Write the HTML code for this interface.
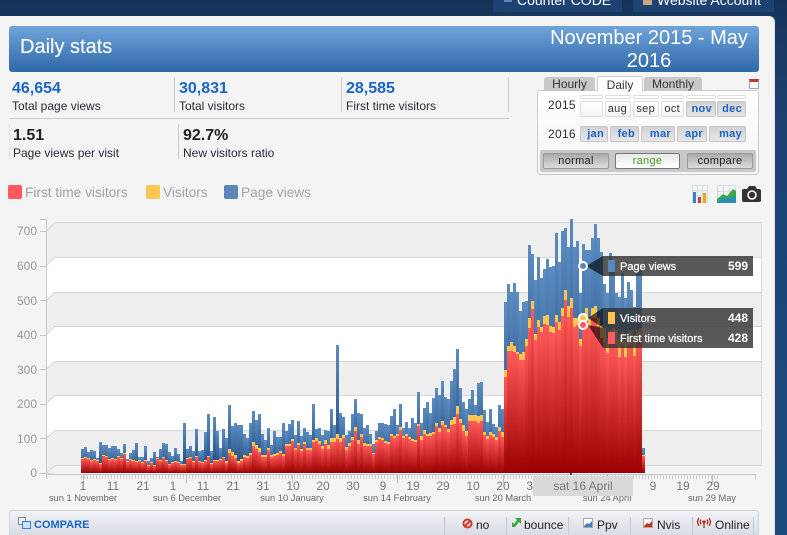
<!DOCTYPE html>
<html><head><meta charset="utf-8"><title>Daily stats</title>
<style>
html,body{margin:0;padding:0;overflow:hidden;width:787px;height:535px}
body{background:#16345a;font-family:"Liberation Sans",Arial,sans-serif;color:#222}
#page{position:absolute;left:0;top:0;width:787px;height:535px;overflow:hidden;background:linear-gradient(180deg,#16345a 0,#1c4272 120px,#1f4a80 535px)}
#page div,#page span{position:absolute;white-space:nowrap;box-sizing:border-box}
.nav{top:-8px;height:20px;background:#1e4272;color:#fff;font-size:14px;line-height:18px;border-radius:2px}
#panel{left:-6px;top:16px;width:781px;height:519px;background:#f4f4f4;border-radius:6px 6px 0 0;border-right:1px solid #dfe3e8}
#hd{left:9px;top:26px;width:750px;height:46px;background:linear-gradient(180deg,#70a4da,#2f69a8);border-radius:3px;color:#fff}
.n{font-size:16px;font-weight:bold;line-height:18px;color:#1a64c8}
.k{font-size:16px;font-weight:bold;line-height:18px;color:#222}
.l{font-size:12px;line-height:14px;color:#2a2a3a}
.v{width:1px;background:#ccc}
.lg{font-size:13.7px;line-height:16px;color:#a3a3a3}
.sq{width:14px;height:14px;border-radius:2px;top:185px}
.tab{font-size:12px;text-align:center;color:#333;border-radius:3px 3px 0 0}
.m{font-size:11px;height:16px;line-height:15px;text-align:right;padding-right:3px;border:1px solid #ddd;border-radius:2px;color:#333;background:linear-gradient(180deg,#fff,#f4f4f4);letter-spacing:.3px}
.b{font-weight:bold;color:#1a64c8;background:linear-gradient(180deg,#d2d2d2,#e6e6e6);border-color:#c6c6c6}
.t{font-size:0;height:4px;top:95px;border:1px solid #ddd;border-radius:2px;background:#fff}
.md{top:153px;height:16px;line-height:15px;font-size:11px;text-align:center;border-radius:2px;background:linear-gradient(180deg,#aaa,#dcdcdc);border:1px solid #999;color:#222;letter-spacing:.3px}
#bar{left:9px;top:510px;width:750px;height:25px;background:linear-gradient(180deg,#f2f4f7,#d8dce3);border:1px solid #d2d6dc;border-bottom:0;border-radius:3px 3px 0 0}
.s{top:517px;width:1px;height:18px;background:#c6cad0}
.bt{top:518px;font-size:12px;line-height:15px;color:#222}
</style></head>
<body>
<div id="page">
<div class="nav" style="left:493px;width:129px"><span style="left:11px;top:8px;width:8px;height:2px;background:#5a8abf"></span><span style="left:24px;top:-1px">Counter CODE</span></div>
<div class="nav" style="left:633px;width:141px"><span style="left:10px;top:4px;width:9px;height:9px;background:#c9a77a"></span><span style="left:24px;top:-1px">Website Account</span></div>
<div id="panel"></div>
<div id="hd">
<span style="left:11px;top:9px;font-size:20px;line-height:24px;text-shadow:0 0 1px rgba(255,255,255,.4)">Daily stats</span>
<span style="left:530px;top:1px;width:220px;font-size:20px;line-height:23px;text-align:center;white-space:normal">November 2015 - May 2016</span>
</div>

<div class="n" style="left:12px;top:80px">46,654</div><div class="l" style="left:12px;top:99px">Total page views</div>
<div class="v" style="left:174px;top:77px;height:35px"></div>
<div class="n" style="left:179px;top:80px">30,831</div><div class="l" style="left:179px;top:99px">Total visitors</div>
<div class="v" style="left:341px;top:77px;height:35px"></div>
<div class="n" style="left:346px;top:80px">28,585</div><div class="l" style="left:346px;top:99px">First time visitors</div>
<div class="v" style="left:508px;top:77px;height:35px"></div>
<div style="left:9px;top:118px;width:500px;height:1px;background:#ccc"></div>
<div class="v" style="left:9px;top:124px;height:35px;background:#e2e2e2"></div>
<div class="k" style="left:13px;top:127px">1.51</div><div class="l" style="left:13px;top:146px">Page views per visit</div>
<div class="v" style="left:178px;top:124px;height:35px"></div>
<div class="k" style="left:183px;top:127px">92.7%</div><div class="l" style="left:183px;top:146px">New visitors ratio</div>

<div class="sq" style="left:8px;background:#ff5a5f"></div><div class="lg" style="left:25px;top:185px">First time visitors</div>
<div class="sq" style="left:146px;background:#fdc752"></div><div class="lg" style="left:163px;top:185px">Visitors</div>
<div class="sq" style="left:224px;background:#5a88bb"></div><div class="lg" style="left:241px;top:185px">Page views</div>

<!-- calendar panel -->
<div style="left:537px;top:90px;width:222px;height:85px;border:1px solid #ccc;border-radius:3px;background:linear-gradient(180deg,#fff,#f4f4f4)"></div>
<div class="tab" style="left:544px;top:77px;width:51px;height:14px;line-height:15px;background:#c8c8c8">Hourly</div>
<div class="tab" style="left:597px;top:76px;width:46px;height:15px;line-height:17px;background:#fff;border:1px solid #ccc;border-bottom:0">Daily</div>
<div class="tab" style="left:644px;top:77px;width:58px;height:14px;line-height:15px;background:#c8c8c8">Monthly</div>
<div style="left:749px;top:79px;width:10px;height:10px;background:#fff;border:1px solid #9ab;border-top:3px solid #c0392b;font-size:0"></div>

<div class="t" style="left:580px;width:23px"></div><div class="t" style="left:605px;width:26px"></div><div class="t" style="left:633px;width:26px"></div><div class="t" style="left:661px;width:23px"></div><div class="t" style="left:686px;width:30px"></div><div class="t" style="left:717px;width:29px"></div>
<div class="l" style="left:548px;top:98px;letter-spacing:.3px">2015</div>
<div class="m" style="left:580px;top:101px;width:23px"></div>
<div class="m" style="left:605px;top:101px;width:26px">aug</div>
<div class="m" style="left:633px;top:101px;width:26px">sep</div>
<div class="m" style="left:661px;top:101px;width:23px">oct</div>
<div class="m b" style="left:686px;top:101px;width:30px">nov</div>
<div class="m b" style="left:717px;top:101px;width:29px">dec</div>
<div class="l" style="left:548px;top:127px;letter-spacing:.3px">2016</div>
<div class="m b" style="left:580px;top:126px;width:28px">jan</div>
<div class="m b" style="left:610px;top:126px;width:29px">feb</div>
<div class="m b" style="left:641px;top:126px;width:34px">mar</div>
<div class="m b" style="left:677px;top:126px;width:30px">apr</div>
<div class="m b" style="left:709px;top:126px;width:37px">may</div>
<div style="left:540px;top:150px;width:216px;height:22px;background:#c8c8c8;border-radius:2px"></div>
<div class="md" style="left:543px;width:66px">normal</div>
<div class="md" style="left:615px;width:65px;background:linear-gradient(180deg,#e8e8e8,#fff);color:#4a9a2a;border-color:#777">range</div>
<div class="md" style="left:687px;width:66px">compare</div>

<svg width="787" height="535" viewBox="0 0 787 535" style="position:absolute;left:0;top:0" font-family="Liberation Sans, Arial, sans-serif">
<defs>
<linearGradient id="rg" x1="0" y1="0" x2="0" y2="1"><stop offset="0" stop-color="#ff5a5a"/><stop offset="1" stop-color="#9c0000"/></linearGradient>
<linearGradient id="bg" x1="0" y1="0" x2="0" y2="1"><stop offset="0" stop-color="#5b8cc1"/><stop offset="1" stop-color="#1a4275"/></linearGradient>
</defs>

<!-- plot bands -->
<rect x="55" y="222" width="707" height="243" fill="#fff"/>
<path d="M46 231L55 222V465L46 473Z" fill="#fff"/>
<g fill="#eeeeee"><rect x="55" y="222" width="707" height="35"/><rect x="55" y="292" width="707" height="34"/><rect x="55" y="361" width="707" height="34"/><rect x="55" y="430" width="707" height="35"/>
<path d="M46 231L55 222V257L46 266Z"/><path d="M46 300L55 292V326L46 335Z"/><path d="M46 369L55 361V395L46 404Z"/><path d="M46 438L55 430V465L46 473Z"/></g>
<g fill="none" stroke="#d8d8d8" stroke-width="1">
<path d="M55 222.5H762M55 257.5H762M55 292.5H762M55 326.5H762M55 361.5H762M55 395.5H762M55 430.5H762M55 465.5H762M761.5 222V465"/>
<path d="M46 231.5L55 222.5M46 266L55 257.5M46 300.5L55 292.5M46 335L55 326.5M46 369.5L55 361.5M46 404L55 395.5M46 438.5L55 430.5M46 473.5L55 465.5"/>
</g>
<rect x="46" y="473" width="9" height="1" fill="#d8d8d8"/>
<g stroke="#c8c8c8" fill="none"><path d="M46.5 219V479M40 219.5H46M40 231.5H46M40 266.5H46M40 300.5H46M40 335.5H46M40 369.5H46M40 404.5H46M40 438.5H46M40 473.5H46M46 474.5H755M755.5 474V479"/></g>
<line x1="81" x2="720" y1="477" y2="477" stroke="#cfcfcf" stroke-width="4" stroke-dasharray="1 2"/>
<path d="M83.5 475V483M186.5 475V483M292.5 475V483M397.5 475V483M503.5 475V483M607.5 475V483M712.5 475V483" stroke="#bbb" fill="none"/>

<g font-size="12" fill="#999" text-anchor="end">
<text x="37" y="235">700</text><text x="37" y="270">600</text><text x="37" y="305">500</text><text x="37" y="339">400</text><text x="37" y="374">300</text><text x="37" y="408">200</text><text x="37" y="443">100</text><text x="37" y="477">0</text>
</g>

<g id="bars"></g>
<rect x="570" y="473" width="2" height="2" fill="#445"/>

<!-- tooltips -->
<g fill="#000" fill-opacity=".62">
<path d="M586 266L603 256V276Z"/><path d="M588 318L603 308V328Z"/><path d="M588 325L603 328V348Z"/>
</g>
<g fill="#333" fill-opacity=".82"><rect x="603" y="256" width="150" height="20"/><rect x="603" y="308" width="150" height="40"/></g>
<rect x="608" y="260" width="7" height="12" fill="#5a88bb"/><rect x="608" y="312" width="7" height="12" fill="#fdc44f"/><rect x="608" y="332" width="7" height="12" fill="#ff5a5f"/>
<g fill="#fff" font-size="11" stroke="#fff" stroke-width=".25">
<text x="620" y="270">Page views</text><text x="620" y="322">Visitors</text><text x="620" y="342">First time visitors</text>
<g font-size="12" font-weight="bold" text-anchor="end" stroke="none"><text x="748" y="270">599</text><text x="748" y="322">448</text><text x="748" y="342">428</text></g>
</g>
<circle cx="583" cy="266" r="4" fill="#5a88bb" stroke="#fff" stroke-width="2"/>
<circle cx="583" cy="318" r="4" fill="#fdc44f" stroke="#fff" stroke-width="2"/>
<circle cx="583" cy="325" r="4" fill="#ff5a5f" stroke="#fff" stroke-width="2"/>

<!-- x labels -->
<g font-size="12" fill="#777" text-anchor="middle">
<text x="83" y="490">1</text><text x="113" y="490">11</text><text x="143" y="490">21</text><text x="173" y="490">1</text><text x="203" y="490">11</text><text x="233" y="490">21</text><text x="263" y="490">31</text><text x="293" y="490">10</text><text x="323" y="490">20</text><text x="353" y="490">30</text><text x="383" y="490">9</text><text x="413" y="490">19</text><text x="443" y="490">29</text><text x="473" y="490">10</text><text x="503" y="490">20</text><text x="533" y="490">30</text><text x="653" y="490">9</text><text x="683" y="490">19</text><text x="713" y="490">29</text>
</g>
<g font-size="9.3" fill="#666" text-anchor="middle">
<text x="83" y="501">sun 1 November</text><text x="187" y="501">sun 6 December</text><text x="292" y="501">sun 10 January</text><text x="397" y="501">sun 14 February</text><text x="503" y="501">sun 20 March</text><text x="607" y="501">sun 24 April</text><text x="712" y="501">sun 29 May</text>
</g>
<rect x="533" y="476" width="100" height="20" fill="#d9d9d9"/>
<text x="583" y="490" font-size="12" fill="#777" text-anchor="middle">sat 16 April</text>

<!-- chart icons -->
<g stroke="#d5dbe3" fill="none"><path d="M692.5 185V203M697.5 185V203M702.5 185V203M707.5 185V203M692 185.5H708M692 190.5H708M692 195.5H708M692 202.5H708"/></g>
<rect x="693" y="192" width="3" height="11" fill="#3d7fc4"/><rect x="698" y="197" width="3" height="6" fill="#c9452e"/><rect x="703" y="193" width="3" height="10" fill="#eda11c"/>
<g stroke="#d5dbe3" fill="none"><path d="M717.5 185V203M723.5 185V203M729.5 185V203M735.5 185V203M717 185.5H736M717 191.5H736M717 197.5H736"/></g>
<path d="M717 199L723 194L727 196L733 189L736 191V203H717Z" fill="#3aa84a"/><path d="M717 202L724 197L729 199L736 195V203H717Z" fill="#2e8fb5"/>
<path d="M742 191a2 2 0 0 1 2-2h3l2-3h6l2 3h2a2 2 0 0 1 2 2v9a2 2 0 0 1-2 2h-15a2 2 0 0 1-2-2Z" fill="#333"/>
<circle cx="752" cy="195" r="4" fill="#333" stroke="#fff" stroke-width="1.6"/>
</svg>

<!-- bottom bar -->
<div id="bar"></div>
<svg width="14" height="13" style="position:absolute;left:18px;top:517px"><rect x=".5" y=".5" width="7" height="7" fill="#eef" stroke="#888"/><rect x="4.5" y="4.5" width="8" height="7" fill="#cfe2fa" stroke="#3b7fd0"/></svg>
<div class="bt" style="left:34px;font-weight:bold;font-size:11px;color:#1a64c8">COMPARE</div>
<div class="s" style="left:444px"></div><div class="s" style="left:506px"></div><div class="s" style="left:568px"></div><div class="s" style="left:630px"></div><div class="s" style="left:692px"></div><div class="s" style="left:753px"></div>
<svg width="11" height="11" style="position:absolute;left:462px;top:518px"><circle cx="5.5" cy="5.5" r="4" fill="#fff" stroke="#d9321f" stroke-width="2"/><path d="M3 8L8 3" stroke="#d9321f" stroke-width="2"/></svg>
<div class="bt" style="left:476px">no</div>
<svg width="11" height="11" style="position:absolute;left:511px;top:517px"><path d="M1 10V5L3 7L6 3L4 1H10V7L8 5L4 10Z" fill="#3fa53a"/></svg>
<div class="bt" style="left:524px">bounce</div>
<svg width="10" height="10" style="position:absolute;left:583px;top:518px"><rect x=".5" y=".5" width="9" height="9" fill="#fff" stroke="#b9a98c"/><path d="M1 8L4 5L6 6L9 3V9H1Z" fill="#3b7fd0"/></svg>
<div class="bt" style="left:597px">Ppv</div>
<svg width="10" height="10" style="position:absolute;left:643px;top:518px"><rect x=".5" y=".5" width="9" height="9" fill="#fff" stroke="#b9a98c"/><path d="M1 8L4 5L6 6L9 3V9H1Z" fill="#c9302c"/></svg>
<div class="bt" style="left:657px">Nvis</div>
<svg width="16" height="12" style="position:absolute;left:696px;top:517px" fill="none" stroke="#c9201a" stroke-width="1.3"><path d="M3 1Q0 5 3 9M13 1Q16 5 13 9M5 2.5Q3.5 5 5 7.5M11 2.5Q12.5 5 11 7.5"/><path d="M8 5V11" stroke="#555"/><circle cx="8" cy="5" r="1" fill="#c9201a"/></svg>
<div class="bt" style="left:715px">Online</div>
</div>
<script>
(function(){
var NS="http://www.w3.org/2000/svg",g=document.getElementById("bars");
function bar(x,t,fill){var r=document.createElementNS(NS,"rect");r.setAttribute("x",x);r.setAttribute("y",t);r.setAttribute("width",3);r.setAttribute("height",473-t);r.setAttribute("fill",fill);g.appendChild(r);}
function draw(x0,B,O,R){
 var i;
 for(i=0;i<B.length;i++)bar(x0+3*i,B[i],"url(#bg)");
 for(i=0;i<O.length;i++)bar(x0+3*i,O[i],"#fdc44f");
 for(i=0;i<R.length;i++)bar(x0+3*i,R[i],"url(#rg)");
}
draw(81,
[449,447,452,450,451,458,442,445,445,448,446,446,449,453,444,459,453,450,443,457,457,446,461,458,452,457,449,443,444,452,456,448,454,461,423,449,446,451,429,451,450,432,414,451,417,431,448,429,438,405,426,423,425,425,434,438,423,411,420,414,434,440,428,445,431,437,437,423,431,424,420,435,421,436,428,432,435,404,429,428,435,430,431,409,425,345,413,417,435,431,414,399,413,414,428,425,434,444,431,423,423,424,425,416,409,425,404,428,422,428,418,423,392,423,408,402,413,398,388,395,381,397,399,381,369,349,388,402,409,399,390,405,383,382,410,422,409,424,427,405,409],
[458,457,458,460,459,460,463,455,456,459,458,459,456,458,453,461,459,460,461,460,462,460,465,462,465,458,460,457,460,464,462,461,462,464,464,458,457,461,456,461,462,460,456,463,460,460,459,457,461,449,452,455,461,459,455,456,453,442,445,448,455,455,448,455,454,453,451,454,444,444,439,448,443,449,442,448,448,440,438,441,446,440,445,438,438,434,438,435,447,443,437,427,440,434,443,444,444,453,440,437,438,441,442,434,436,434,427,436,434,437,439,440,424,436,430,434,433,432,423,428,421,425,429,420,417,406,419,425,431,415,415,415,416,415,432,436,432,434,437,427,432],
[459,458,459,461,460,461,464,456,457,460,459,460,457,459,454,462,460,461,462,461,463,461,466,463,466,459,461,458,461,465,463,462,463,465,465,459,458,462,457,462,463,461,457,464,461,461,460,458,463,453,456,458,463,461,457,458,455,446,449,452,457,457,450,457,456,455,453,456,446,446,441,450,445,451,444,450,450,442,441,444,449,444,449,442,442,439,442,438,450,446,440,431,444,437,446,446,446,454,442,439,440,443,444,436,438,436,430,438,436,439,441,442,426,440,434,436,436,434,426,432,425,427,432,425,424,414,423,431,436,421,421,421,423,421,435,439,435,437,440,431,437]);
draw(504,
[302,284,292,283,292,311,302,301,245,254,280,257,278,269,259,267,266,233,262,231,228,247,219,247,241,293,244,250,250,238,224,238,252,284,293,253,260,293,297,273,298,282,290,307,270,270,448],
[370,346,342,346,352,354,352,339,318,301,334,320,327,316,315,326,327,315,322,308,290,306,298,318,318,339,315,308,318,308,306,318,325,328,338,330,328,330,340,332,340,332,330,340,330,328,455],
[377,351,351,352,354,360,360,346,328,309,340,327,332,324,325,332,333,322,330,316,300,317,308,327,325,346,325,320,326,318,318,326,338,342,353,344,342,345,357,346,357,345,344,356,340,338,456]);
})();
</script>
</body></html>
